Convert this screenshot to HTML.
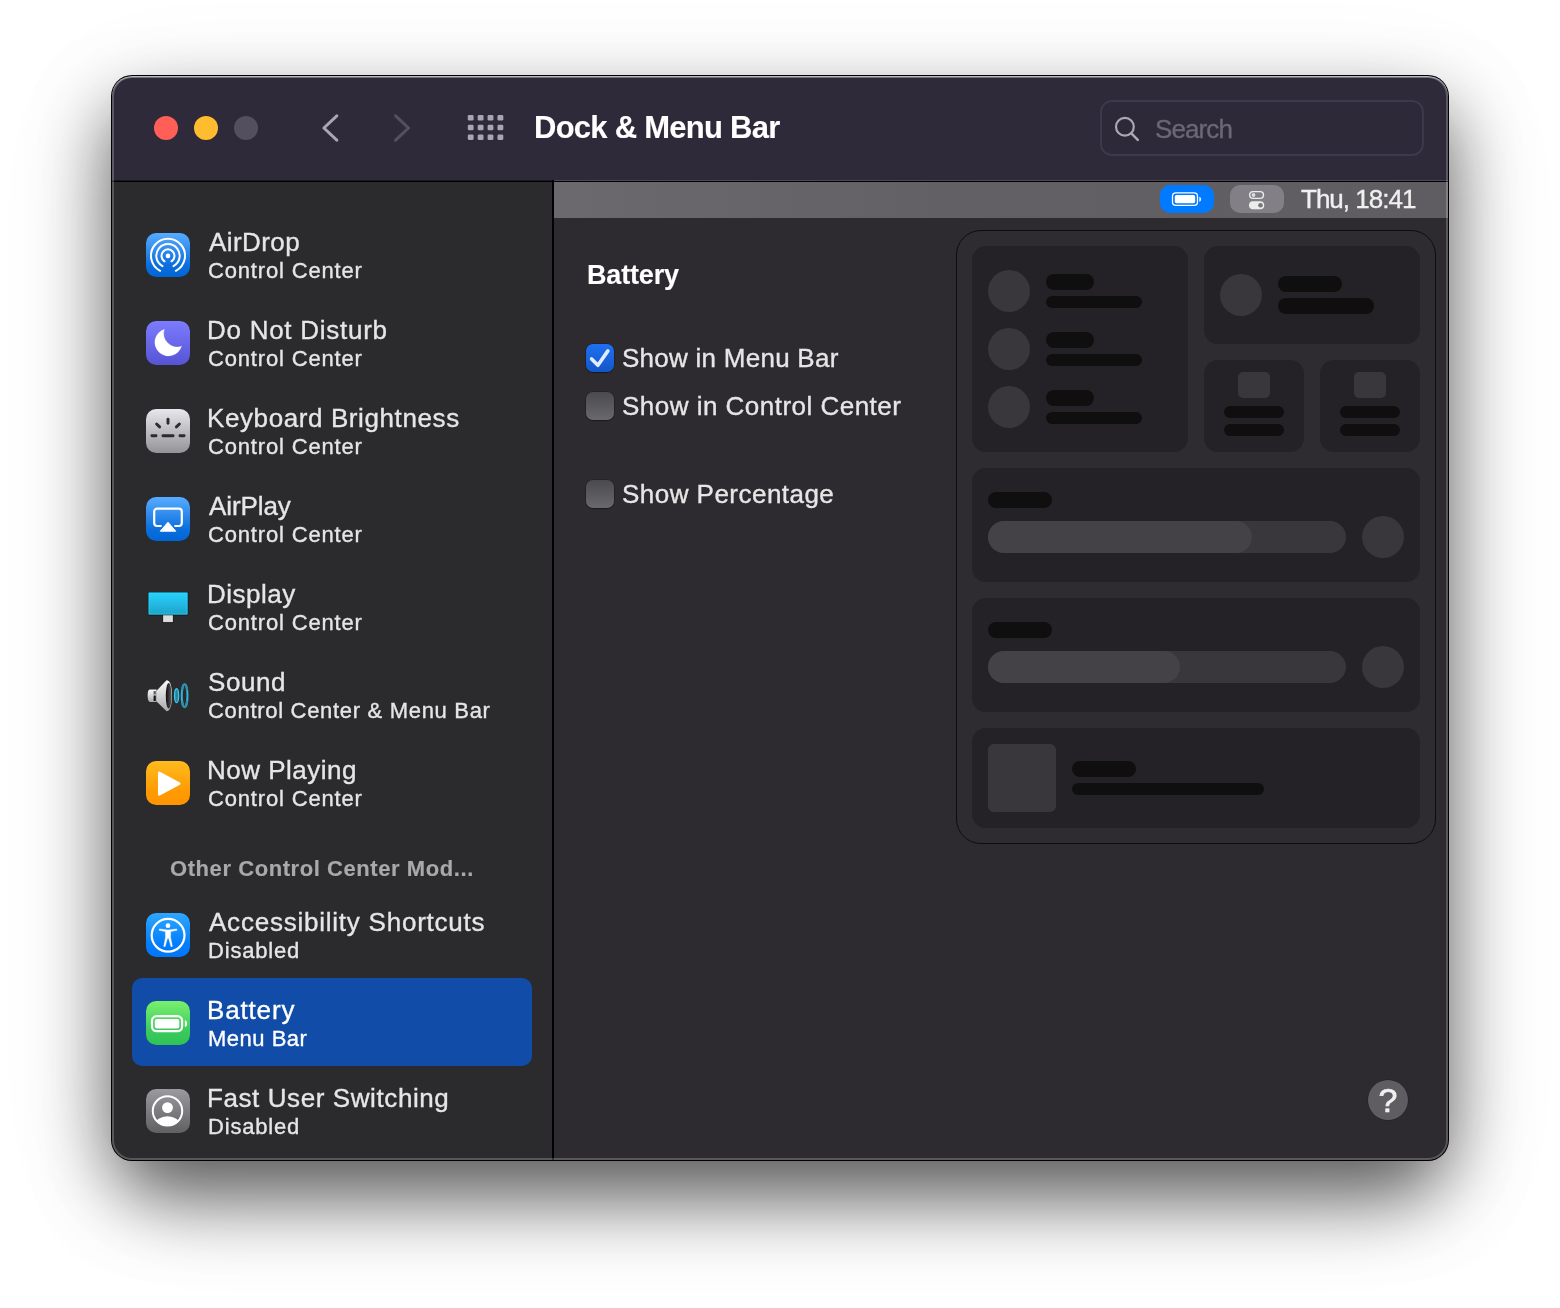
<!DOCTYPE html>
<html lang="en">
<head>
<meta charset="utf-8">
<title>Dock &amp; Menu Bar</title>
<style>
*{box-sizing:border-box;margin:0;padding:0}
html,body{width:1560px;height:1308px;overflow:hidden;background:#fff}
body{position:relative;font-family:"Liberation Sans",sans-serif;-webkit-font-smoothing:antialiased}
.abs{position:absolute}
#caster{position:absolute;left:111px;top:75px;width:1338px;height:1086px;border-radius:21px 21px 56px 56px;
  box-shadow:0 37px 72px rgba(0,0,0,.60),0 30px 120px rgba(0,0,0,.11)}
#shadow{position:absolute;left:111px;top:75px;width:1338px;height:1086px;border-radius:21px;background:#000}
#win{position:absolute;left:112px;top:76px;width:1336px;height:1084px;border-radius:20px;overflow:hidden;background:#2d2b30}
#win .hl{position:absolute;left:0;top:0;right:0;bottom:0;border-radius:20px;z-index:50;pointer-events:none;
  box-shadow:inset 0 1px 0 0 rgba(255,255,255,.5),inset 0 2px 0 0 rgba(255,255,255,.16),inset 0 0 0 2px rgba(255,255,255,.21)}
#titlebar{position:absolute;left:0;top:0;width:1336px;height:105px;background:#2f2a3a}
#sidebar{position:absolute;left:0;top:106px;width:440px;height:978px;background:#2b2b2d}
#tline{position:absolute;left:0;top:104px;width:1336px;height:2px;background:#000}
#tlineL{position:absolute;left:0;top:104px;width:440px;height:1px;background:#1a181e}
#tlineR{position:absolute;left:442px;top:104px;width:894px;height:1px;background:#4b4851}
#vline{position:absolute;left:440px;top:104px;width:2px;height:980px;background:#000}
#strip{position:absolute;left:442px;top:106px;width:894px;height:36px;background:linear-gradient(90deg,#6b696e,#626065 45%,#5f5d62)}
.t{position:absolute;white-space:nowrap;line-height:1;color:#e6e6e6;will-change:transform;-webkit-text-stroke:.35px currentColor}
.t1{font-size:26px}
.t2{font-size:22px}
.ico{position:absolute;left:34px;width:44px;height:44px;filter:drop-shadow(0 .5px .7px rgba(0,0,0,.5))}
.dot{position:absolute;top:40px;width:24px;height:24px;border-radius:50%}
.cb{position:absolute;left:474px;width:28px;height:28px;border-radius:7px;background:linear-gradient(#4b4a4e,#69686c);box-shadow:0 0 0 .5px rgba(0,0,0,.35),0 1px 1px rgba(0,0,0,.3)}
.cb.on{background:linear-gradient(#1f70f2,#1357c8)}
.card{position:absolute;background:#242226;border-radius:14px}
.bar{position:absolute;background:#0f0f10;border-radius:8px}
.blob{position:absolute;background:#39373c}
</style>
</head>
<body>
<div id="caster"></div>
<div id="shadow"></div>
<div id="win">
  <div id="titlebar"></div>
  <div id="sidebar"></div>
  <div id="strip"></div>
  <div id="tline"></div><div id="tlineL"></div><div id="tlineR"></div>
  <div id="vline"></div>

  <!--TITLEBAR-->
  <div class="dot" style="left:42px;background:#ff5f57"></div>
  <div class="dot" style="left:82px;background:#febc2e"></div>
  <div class="dot" style="left:122px;background:#544f5e"></div>
  <svg class="abs" style="left:0;top:0" width="1336" height="105" viewBox="0 0 1336 105">
    <path d="M224.8 39.9 L211.9 52 L224.8 64.1" fill="none" stroke="#aaa5b5" stroke-width="3" stroke-linecap="round" stroke-linejoin="round"/>
    <path d="M283.6 39.9 L296.5 52 L283.6 64.1" fill="none" stroke="#55505f" stroke-width="3" stroke-linecap="round" stroke-linejoin="round"/>
    <g fill="#aaa5b5">
      <rect x="355.8" y="39.0" width="5.8" height="5.5" rx="1.3"/><rect x="365.7" y="39.0" width="5.8" height="5.5" rx="1.3"/><rect x="375.6" y="39.0" width="5.8" height="5.5" rx="1.3"/><rect x="385.5" y="39.0" width="5.8" height="5.5" rx="1.3"/>
      <rect x="355.8" y="48.7" width="5.8" height="5.5" rx="1.3"/><rect x="365.7" y="48.7" width="5.8" height="5.5" rx="1.3"/><rect x="375.6" y="48.7" width="5.8" height="5.5" rx="1.3"/><rect x="385.5" y="48.7" width="5.8" height="5.5" rx="1.3"/>
      <rect x="355.8" y="58.5" width="5.8" height="5.5" rx="1.3"/><rect x="365.7" y="58.5" width="5.8" height="5.5" rx="1.3"/><rect x="375.6" y="58.5" width="5.8" height="5.5" rx="1.3"/><rect x="385.5" y="58.5" width="5.8" height="5.5" rx="1.3"/>
    </g>
    <rect x="989" y="25" width="322" height="54" rx="11" fill="#2e2939" stroke="#3e394a" stroke-width="2"/>
    <circle cx="1012.9" cy="50.7" r="8.9" fill="none" stroke="#aba8b1" stroke-width="2.2"/>
    <path d="M1019.3 57.3 L1025.8 63.8" stroke="#aba8b1" stroke-width="2.6" stroke-linecap="round"/>
  </svg>
  <div class="t" id="title" style="left:421.5px;top:36.0px;font-size:31px;font-weight:bold;color:#fff;-webkit-text-stroke-width:.1px;letter-spacing:-0.74px">Dock &amp; Menu Bar</div>
  <div class="t t1" id="search" style="left:1042.5px;top:40.2px;color:#6b6776;letter-spacing:-0.90px">Search</div>
  <!--SIDEBAR-->
  <div class="abs" id="sel" style="left:20px;top:902px;width:400px;height:88px;border-radius:10px;background:#114ca8"></div>
  <svg width="0" height="0" style="position:absolute">
    <defs>
      <linearGradient id="gBlue" x1="0" y1="0" x2="0" y2="1"><stop offset="0" stop-color="#58acff"/><stop offset=".75" stop-color="#0a6ddc"/><stop offset="1" stop-color="#0066d6"/></linearGradient>
      <linearGradient id="gPurple" x1="0" y1="0" x2="0" y2="1"><stop offset="0" stop-color="#7c7cff"/><stop offset="1" stop-color="#5654d4"/></linearGradient>
      <linearGradient id="gLight" x1="0" y1="0" x2="0" y2="1"><stop offset="0" stop-color="#e8e8ec"/><stop offset="1" stop-color="#949398"/></linearGradient>
      <linearGradient id="gOrange" x1="0" y1="0" x2="0" y2="1"><stop offset="0" stop-color="#ffbb1e"/><stop offset=".7" stop-color="#ff9a04"/><stop offset="1" stop-color="#ff9500"/></linearGradient>
      <linearGradient id="gAcc" x1="0" y1="0" x2="0" y2="1"><stop offset="0" stop-color="#2ea7ff"/><stop offset=".7" stop-color="#047dfc"/><stop offset="1" stop-color="#0077fa"/></linearGradient>
      <linearGradient id="gGreen" x1="0" y1="0" x2="0" y2="1"><stop offset="0" stop-color="#7af06e"/><stop offset=".7" stop-color="#38ca5b"/><stop offset="1" stop-color="#30c257"/></linearGradient>
      <linearGradient id="gGray" x1="0" y1="0" x2="0" y2="1"><stop offset="0" stop-color="#9a9a9f"/><stop offset="1" stop-color="#606063"/></linearGradient>
      <linearGradient id="gCyan" x1="0" y1="0" x2="0" y2="1"><stop offset="0" stop-color="#28d2ff"/><stop offset="1" stop-color="#1fa3c8"/></linearGradient>
      <linearGradient id="gCone" x1="0" y1="0" x2="0" y2="1"><stop offset="0" stop-color="#fafafa"/><stop offset=".5" stop-color="#d4d4d6"/><stop offset="1" stop-color="#a8a8ab"/></linearGradient>
      <linearGradient id="gHole" x1="0" y1="0" x2="1" y2="0"><stop offset="0" stop-color="#0c0c0c"/><stop offset="1" stop-color="#5a5a5c"/></linearGradient>
    </defs>
  </svg>

  <svg class="ico" style="top:157px" viewBox="0 0 44 44"><rect width="44" height="44" rx="10" fill="url(#gBlue)"/>
    <g fill="none" stroke="#fff" stroke-width="2" stroke-linecap="round">
      <path d="M14.1 37.8 A17 17 0 1 1 29.9 37.8"/><path d="M16.5 33.1 A11.7 11.7 0 1 1 27.5 33.1"/><path d="M18.5 28.3 A6.5 6.5 0 1 1 25.5 28.3"/>
    </g><circle cx="22" cy="22.9" r="2.3" fill="#fff"/></svg>
  <div class="t t1" style="left:96.5px;top:152.8px;letter-spacing:0.42px">AirDrop</div>
  <div class="t t2" style="left:95.5px;top:183.9px;letter-spacing:0.83px">Control Center</div>

  <svg class="ico" style="top:245px" viewBox="0 0 44 44"><rect width="44" height="44" rx="10" fill="url(#gPurple)"/>
    <path d="M18.4 8.2 A13.7 13.7 0 1 0 35.6 25.3 A13.7 13.7 0 0 1 18.4 8.2 Z" fill="#fff" stroke="#fff" stroke-width=".2" stroke-linejoin="round"/></svg>
  <div class="t t1" style="left:95.0px;top:240.8px;letter-spacing:0.73px">Do Not Disturb</div>
  <div class="t t2" style="left:95.5px;top:271.9px;letter-spacing:0.83px">Control Center</div>

  <svg class="ico" style="top:333px" viewBox="0 0 44 44"><rect width="44" height="44" rx="10" fill="url(#gLight)"/>
    <g fill="none" stroke="#2c2c2e" stroke-width="2.9" stroke-linecap="round">
      <path d="M22 10.2 V14.2"/><path d="M10.6 15 L13.6 17.9"/><path d="M33.4 15 L30.4 17.9"/>
      <path d="M5.9 26.7 H10"/><path d="M16.9 26.7 H27.1"/><path d="M34 26.7 H38.1"/>
    </g></svg>
  <div class="t t1" style="left:95.0px;top:328.8px;letter-spacing:0.60px">Keyboard Brightness</div>
  <div class="t t2" style="left:95.5px;top:359.9px;letter-spacing:0.83px">Control Center</div>

  <svg class="ico" style="top:421px" viewBox="0 0 44 44"><rect width="44" height="44" rx="10" fill="url(#gBlue)"/>
    <path d="M15.6 29 H11.2 A3 3 0 0 1 8.2 26 V14.6 A3 3 0 0 1 11.2 11.6 H32.8 A3 3 0 0 1 35.8 14.6 V26 A3 3 0 0 1 32.8 29 H28.4" fill="none" stroke="#fff" stroke-width="2.2"/>
    <path d="M22 25.2 L29.8 34.2 H14.2 Z" fill="#fff" stroke="#fff" stroke-width="1" stroke-linejoin="round"/></svg>
  <div class="t t1" style="left:96.5px;top:416.8px;letter-spacing:-0.08px">AirPlay</div>
  <div class="t t2" style="left:95.5px;top:447.9px;letter-spacing:0.83px">Control Center</div>

  <svg class="ico" style="top:509px" viewBox="0 0 44 44">
    <rect x="16.7" y="30" width="10.6" height="7.7" fill="#161617"/>
    <rect x="17.1" y="30" width="9.8" height="7.1" fill="#dcdcde"/>
    <rect x="1.9" y="6.9" width="40.3" height="23.3" rx=".8" fill="#0b1418"/>
    <rect x="2.6" y="7.6" width="38.9" height="21.9" fill="url(#gCyan)"/>
    <rect x="3" y="8" width="38.1" height="21.1" fill="none" stroke="#2bdcff" stroke-width=".8" opacity=".8"/></svg>
  <div class="t t1" style="left:95.0px;top:504.8px;letter-spacing:0.51px">Display</div>
  <div class="t t2" style="left:95.5px;top:535.9px;letter-spacing:0.83px">Control Center</div>

  <svg class="ico" style="top:597px" viewBox="0 0 44 44">
    <path d="M4 16.5 Q1.6 16.5 1.6 22.3 Q1.6 29 4 29 H10.5 V16.5 Z" fill="url(#gCone)"/>
    <path d="M7.6 18 H9.8 V21.5 H7.6 Z" fill="#5b6068"/><path d="M7.6 22.5 H9.8 V28 H7.6 Z" fill="#151515"/>
    <path d="M10.3 18 L20.5 7.2 Q26 7.5 26 22.7 Q26 38 20.5 38.2 L10.3 28.3 Z" fill="url(#gCone)"/>
    <ellipse cx="22.7" cy="22.7" rx="2.9" ry="12.7" fill="url(#gHole)"/>
    <ellipse cx="30.6" cy="22.7" rx="2.0" ry="6.9" fill="#2a7f96" stroke="#35c8ee" stroke-width="1.4"/>
    <ellipse cx="38.6" cy="22.7" rx="2.9" ry="11.4" fill="#2b2b2d" stroke="#33b4d6" stroke-width="2.1"/>
    <ellipse cx="38.6" cy="22.7" rx="2.9" ry="11.4" fill="none" stroke="#2e8ea8" stroke-width="2.1" stroke-dasharray="14 10.5" stroke-dashoffset="-5"/></svg>
  <div class="t t1" style="left:95.5px;top:592.8px;letter-spacing:0.60px">Sound</div>
  <div class="t t2" style="left:95.5px;top:623.9px;letter-spacing:0.69px">Control Center &amp; Menu Bar</div>

  <svg class="ico" style="top:685px" viewBox="0 0 44 44"><rect width="44" height="44" rx="10" fill="url(#gOrange)"/>
    <path d="M13.3 11.8 V33.4 L33.2 22.6 Z" fill="#fff" stroke="#fff" stroke-width="2.6" stroke-linejoin="round"/></svg>
  <div class="t t1" style="left:95.0px;top:680.8px;letter-spacing:0.50px">Now Playing</div>
  <div class="t t2" style="left:95.5px;top:711.9px;letter-spacing:0.83px">Control Center</div>

  <div class="t t2" id="hdr" style="-webkit-text-stroke-width:.15px;left:57.5px;top:782.0px;font-weight:bold;color:#a9a9ab;letter-spacing:0.57px">Other Control Center Mod...</div>

  <svg class="ico" style="top:837px" viewBox="0 0 44 44"><rect width="44" height="44" rx="10" fill="url(#gAcc)"/>
    <circle cx="22.1" cy="22.3" r="16.4" fill="none" stroke="#fff" stroke-width="2.2"/>
    <circle cx="22" cy="12.7" r="2.4" fill="#fff"/>
    <path d="M13.4 15.9 L22 17 L30.7 15.9 L31 17.2 L24.7 18.6 L24.6 24.5 L26.4 33.3 L25 33.8 L22.7 25.6 L21.4 25.6 L19.1 33.8 L17.7 33.3 L19.5 24.5 L19.4 18.6 L13.1 17.2 Z" fill="#fff" stroke="#fff" stroke-width=".4" stroke-linejoin="round"/></svg>
  <div class="t t1" style="left:96.5px;top:832.8px;letter-spacing:0.77px">Accessibility Shortcuts</div>
  <div class="t t2" style="left:96.0px;top:863.9px;letter-spacing:0.80px">Disabled</div>

  <svg class="ico" style="top:925px" viewBox="0 0 44 44"><rect width="44" height="44" rx="10" fill="url(#gGreen)"/>
    <rect x="6" y="15.2" width="30.1" height="15" rx="4.6" fill="none" stroke="#fff" stroke-width="2.2"/>
    <rect x="8.8" y="18" width="24.5" height="9.5" rx="2.3" fill="#fff"/>
    <path d="M38.9 19.1 C41.9 20.4 41.9 24.9 38.9 26.2 Z" fill="#fff"/></svg>
  <div class="t t1" style="left:95.0px;top:920.8px;color:#fff;letter-spacing:0.84px">Battery</div>
  <div class="t t2" style="left:96.0px;top:951.9px;color:#fff;letter-spacing:0.50px">Menu Bar</div>

  <svg class="ico" style="top:1013px" viewBox="0 0 44 44"><rect width="44" height="44" rx="10" fill="url(#gGray)"/>
    <clipPath id="ucp"><circle cx="21.5" cy="21.9" r="15.2"/></clipPath>
    <ellipse cx="21.5" cy="36" rx="12.4" ry="8.8" fill="#fff" clip-path="url(#ucp)"/>
    <circle cx="21.5" cy="18.6" r="5.4" fill="#fff"/>
    <circle cx="21.5" cy="21.9" r="14.7" fill="none" stroke="#fff" stroke-width="2"/></svg>
  <div class="t t1" style="left:95.0px;top:1008.8px;letter-spacing:0.59px">Fast User Switching</div>
  <div class="t t2" style="left:96.0px;top:1039.9px;letter-spacing:0.80px">Disabled</div>
  <!--STRIP-->
  <div class="abs" style="left:1048px;top:109px;width:54px;height:28px;border-radius:10px;background:#007aff"></div>
  <div class="abs" style="left:1118px;top:109px;width:54px;height:28px;border-radius:10px;background:#828086"></div>
  <svg class="abs" style="left:1040px;top:106px" width="140" height="36" viewBox="1040 106 140 36">
    <rect x="1060.5" y="116.9" width="25" height="12.5" rx="3.4" fill="none" stroke="#fff" stroke-width="1.3"/>
    <rect x="1062.8" y="119.1" width="20.4" height="8.1" rx="1.7" fill="#fff"/>
    <path d="M1087.3 120.7 C1089.7 121.6 1089.7 124.9 1087.3 125.8 Z" fill="#fff"/>
    <rect x="1137.7" y="115.6" width="13.8" height="6.8" rx="3.4" fill="none" stroke="#ececec" stroke-width="1.4"/>
    <circle cx="1141.5" cy="119" r="1.9" fill="#dcdcde"/>
    <rect x="1137" y="125.2" width="15.2" height="8" rx="4" fill="#ececec"/>
    <circle cx="1148.5" cy="129.2" r="2.3" fill="#77757b"/>
  </svg>
  <div class="t t1" id="clock" style="left:1189.0px;top:110.0px;color:#f0f0f0;letter-spacing:-0.99px">Thu, 18:41</div>
  <!--PANE-->
  <div class="t t1" id="h1" style="font-size:27px;-webkit-text-stroke-width:.1px;left:474.5px;top:186.2px;font-weight:bold;color:#fff;letter-spacing:-0.17px">Battery</div>
  <div class="cb on" style="top:268px"><svg width="28" height="28" viewBox="0 0 28 28" style="position:absolute;left:0;top:0"><path d="M5.6 14.9 L11.9 21.3 L21.9 6.9" fill="none" stroke="#e3ebff" stroke-width="3.6" stroke-linecap="round" stroke-linejoin="round"/></svg></div>
  <div class="cb" style="top:316px"></div>
  <div class="cb" style="top:404px"></div>
  <div class="t t1 lab" style="left:509.5px;top:268.8px;letter-spacing:0.26px">Show in Menu Bar</div>
  <div class="t t1 lab" style="left:509.5px;top:317.0px;letter-spacing:0.48px">Show in Control Center</div>
  <div class="t t1 lab" style="left:509.5px;top:404.9px;letter-spacing:0.47px">Show Percentage</div>
  <div class="abs" id="help" style="left:1256px;top:1004px;width:40px;height:40px;border-radius:50%;background:#5f5d62;box-shadow:0 0 0 .5px rgba(0,0,0,.3)"></div>
  <div class="t" id="q" style="left:1256px;top:1007px;width:40px;text-align:center;font-size:34px;color:#f0f0f0;-webkit-text-stroke-width:.65px">?</div>
  <!--PREVIEW-->
  <div class="abs" id="panel" style="left:844px;top:154px;width:480px;height:614px;border-radius:25px;background:#2e2c31;border:1px solid #0d0d0f"></div>
  <div class="card" style="left:860px;top:170px;width:216px;height:206px"></div>
  <div class="card" style="left:1092px;top:170px;width:216px;height:98px"></div>
  <div class="card" style="left:1092px;top:284px;width:100px;height:92px"></div>
  <div class="card" style="left:1208px;top:284px;width:100px;height:92px"></div>
  <div class="card" style="left:860px;top:392px;width:448px;height:114px"></div>
  <div class="card" style="left:860px;top:522px;width:448px;height:114px"></div>
  <div class="card" style="left:860px;top:652px;width:448px;height:100px"></div>
  <div class="blob" style="left:876px;top:194px;width:42px;height:42px;border-radius:50%"></div>
  <div class="bar" style="left:934px;top:198px;width:48px;height:16px"></div>
  <div class="bar" style="left:934px;top:220px;width:96px;height:12px"></div>
  <div class="blob" style="left:876px;top:252px;width:42px;height:42px;border-radius:50%"></div>
  <div class="bar" style="left:934px;top:256px;width:48px;height:16px"></div>
  <div class="bar" style="left:934px;top:278px;width:96px;height:12px"></div>
  <div class="blob" style="left:876px;top:310px;width:42px;height:42px;border-radius:50%"></div>
  <div class="bar" style="left:934px;top:314px;width:48px;height:16px"></div>
  <div class="bar" style="left:934px;top:336px;width:96px;height:12px"></div>
  <div class="blob" style="left:1108px;top:198px;width:42px;height:42px;border-radius:50%"></div>
  <div class="bar" style="left:1166px;top:200px;width:64px;height:16px"></div>
  <div class="bar" style="left:1166px;top:222px;width:96px;height:16px"></div>
  <div class="blob" style="left:1126px;top:296px;width:32px;height:26px;border-radius:5px"></div>
  <div class="bar" style="left:1112px;top:330px;width:60px;height:12px"></div>
  <div class="bar" style="left:1112px;top:348px;width:60px;height:12px"></div>
  <div class="blob" style="left:1242px;top:296px;width:32px;height:26px;border-radius:5px"></div>
  <div class="bar" style="left:1228px;top:330px;width:60px;height:12px"></div>
  <div class="bar" style="left:1228px;top:348px;width:60px;height:12px"></div>
  <div class="bar" style="left:876px;top:416px;width:64px;height:16px"></div>
  <div class="blob" style="left:876px;top:445px;width:358px;height:32px;border-radius:16px"></div>
  <div class="blob" style="left:876px;top:445px;width:264px;height:32px;border-radius:16px;background:#444247"></div>
  <div class="blob" style="left:1250px;top:440px;width:42px;height:42px;border-radius:50%"></div>
  <div class="bar" style="left:876px;top:546px;width:64px;height:16px"></div>
  <div class="blob" style="left:876px;top:575px;width:358px;height:32px;border-radius:16px"></div>
  <div class="blob" style="left:876px;top:575px;width:192px;height:32px;border-radius:16px;background:#444247"></div>
  <div class="blob" style="left:1250px;top:570px;width:42px;height:42px;border-radius:50%"></div>
  <div class="blob" style="left:876px;top:668px;width:68px;height:68px;border-radius:6px"></div>
  <div class="bar" style="left:960px;top:685px;width:64px;height:16px"></div>
  <div class="bar" style="left:960px;top:707px;width:192px;height:12px"></div>
  <div class="hl"></div>
</div>
</body>
</html>
